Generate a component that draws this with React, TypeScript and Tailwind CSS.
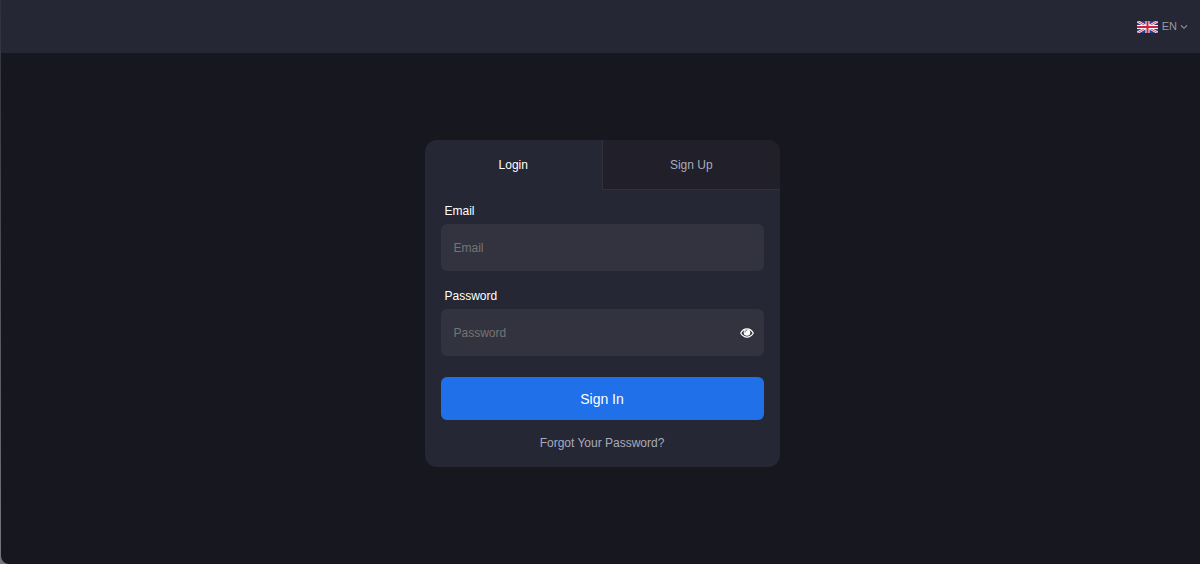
import React, { useState } from 'react';

const FlagGB = () => (
  <svg viewBox="0 0 21 12" className="w-[21px] h-3" aria-hidden="true">
    <rect width="21" height="12" fill="#263f92" />
    <path d="M0 0L21 12M21 0L0 12" stroke="#f4f4f8" strokeWidth="2.4" />
    <path d="M0 0L21 12M21 0L0 12" stroke="#d63a52" strokeWidth="0.9" />
    <path d="M10.5 0V12M0 6H21" stroke="#f8f8fa" strokeWidth="4" />
    <path d="M10.5 0V12M0 6H21" stroke="#d0213d" strokeWidth="2" />
  </svg>
);

const Chevron = () => (
  <svg viewBox="0 0 8 6" className="w-2 h-[6px]" fill="none" stroke="currentColor" strokeWidth="1.1" aria-hidden="true">
    <path d="M1 1.3L4 4.3L7 1.3" />
  </svg>
);

const Eye = () => (
  <svg viewBox="0 0 14 10" className="w-[14px] h-[10px]" aria-hidden="true">
    <path
      d="M0.7 5C2.2 2.4 4.3 0.9 7 0.9S11.8 2.4 13.3 5C11.8 7.6 9.7 9.1 7 9.1S2.2 7.6 0.7 5Z"
      fill="none"
      stroke="currentColor"
      strokeWidth="1.2"
    />
    <circle cx="7" cy="4.5" r="3.3" fill="currentColor" />
    <path d="M5 4.1C5 3 5.8 2.2 6.9 2.2" fill="none" stroke="#32333f" strokeWidth="0.7" strokeLinecap="round" />
  </svg>
);

const inputClass =
  'block w-full h-[47px] rounded-md bg-[#32333f] px-[13px] text-xs text-white placeholder:text-[#757575] outline-none focus:ring-1 focus:ring-[#2070ea]';

const App = () => {
  const [tab, setTab] = useState('login');
  const [visible, setVisible] = useState(false);

  const tabClass = (name: string) =>
    tab === name ? 'text-white' : 'bg-[#201f2a] text-[#a9abbb] border-l border-b border-[#30313d]';

  return (
    <div className="min-h-screen flex flex-col bg-linear-to-b from-[#2f303c] to-[#77757f] font-['Liberation_Sans',Arial,sans-serif]">
      <div className="flex-1 flex flex-col ml-px rounded-bl-lg overflow-hidden bg-[#17171f]">
        <header className="h-[53px] px-3 flex items-center justify-end bg-[#252734]">
          <button type="button" className="flex items-center text-[11px] text-[#9698a6]">
            <FlagGB />
            <span className="ml-1 mr-[3px]">EN</span>
            <Chevron />
          </button>
        </header>

        <main className="flex-1 flex items-center justify-center pl-[3px] pb-[10px]">
          <div className="w-full max-w-[355px] rounded-xl overflow-hidden bg-[#252734]">
            <div className="grid grid-cols-2 h-[50px] text-xs">
              <button type="button" onClick={() => setTab('login')} className={tabClass('login')}>
                Login
              </button>
              <button type="button" onClick={() => setTab('signup')} className={tabClass('signup')}>
                Sign Up
              </button>
            </div>

            <form className="px-4 pt-[13px] pb-4" onSubmit={(e) => e.preventDefault()}>
              <label htmlFor="email" className="block pl-1 mb-[5px] text-xs text-white">Email</label>
              <input id="email" type="email" placeholder="Email" className={inputClass} />

              <label htmlFor="password" className="block pl-1 mt-[17px] mb-[5px] text-xs text-white">Password</label>
              <div className="relative">
                <input
                  id="password"
                  type={visible ? 'text' : 'password'}
                  placeholder="Password"
                  className={inputClass}
                />
                <button
                  type="button"
                  aria-label="Show password"
                  onClick={() => setVisible(!visible)}
                  className="absolute inset-y-0 right-[10px] flex items-center text-white"
                >
                  <Eye />
                </button>
              </div>

              <button type="submit" className="block w-full h-[43px] mt-[21px] rounded-md bg-[#2070ea] text-sm text-white">
                Sign In
              </button>
              <a href="#" className="block mt-[15px] text-center text-xs text-[#a9abbb]">
                Forgot Your Password?
              </a>
            </form>
          </div>
        </main>
      </div>
    </div>
  );
};

export default App;
